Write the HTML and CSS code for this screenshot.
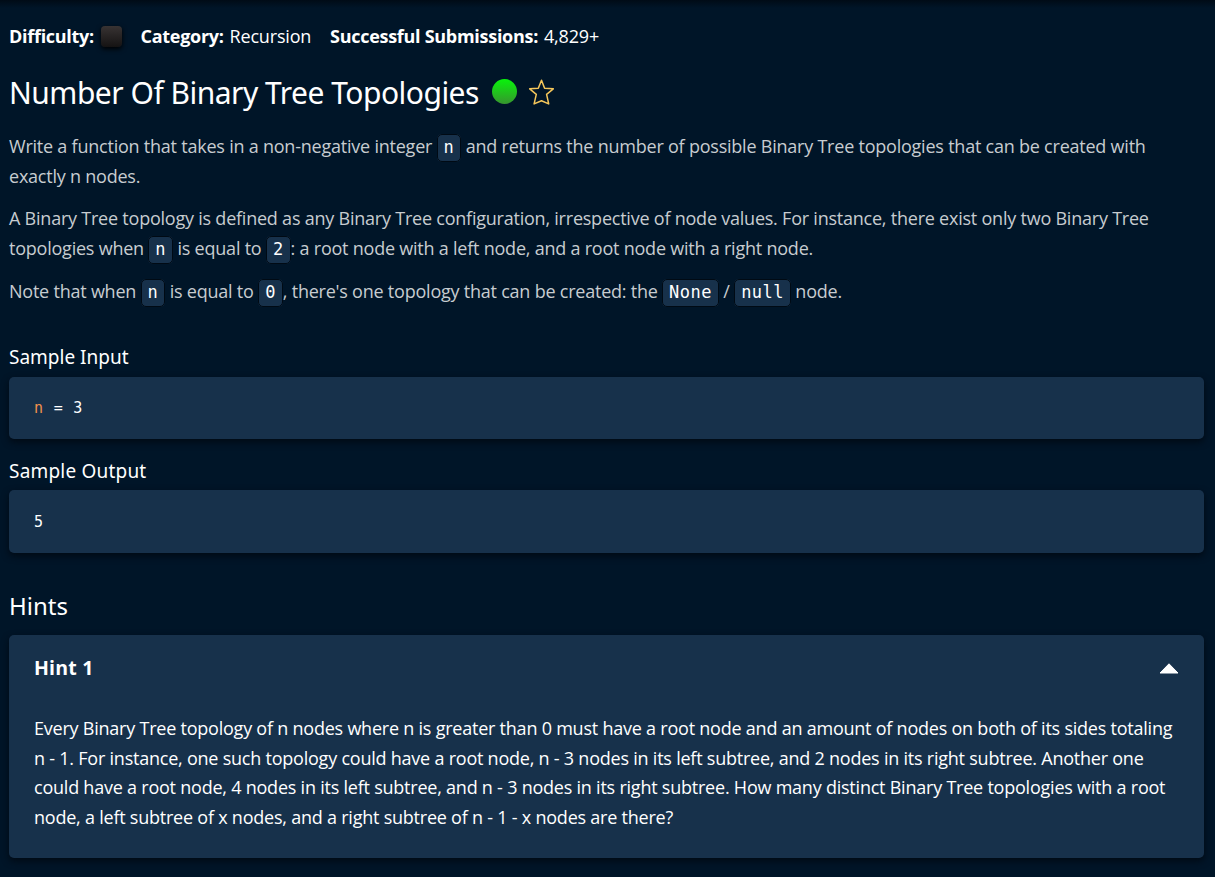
FILE: index.html
```html
<!DOCTYPE html>
<html lang="en">
<head>
<meta charset="utf-8">
<title>Number Of Binary Tree Topologies</title>
<link rel="stylesheet" href="styles.css">
</head>
<body>
<main class="question">
  <div class="stats">
    <div class="stat difficulty"><b>Difficulty:</b><span class="level"></span></div>
    <div class="stat category"><b>Category:</b> Recursion</div>
    <div class="stat submissions"><b>Successful Submissions:</b> 4,829+</div>
  </div>
  <header class="title-row">
    <h1>Number Of Binary Tree Topologies</h1>
    <span class="status"></span>
    <svg class="star" viewBox="0 0 28 28" width="28" height="28"><path d="M14.5 2.2 17.6 10.2 26.3 10.8 19.6 16.3 21.7 25.9 14.5 22.8 7.1 25.9 9.3 16.3 2.7 10.8 11.3 10.2Z"/></svg>
  </header>
  <section class="prompt">
    <p>Write a function that takes in a non-negative integer <code>n</code> and returns the number of possible Binary Tree topologies that can be created with<br>exactly n nodes.</p>
    <p>A Binary Tree topology is defined as any Binary Tree configuration, irrespective of node values. For instance, there exist only two Binary Tree<br>topologies when <code>n</code> is equal to <code>2</code>: a root node with a left node, and a root node with a right node.</p>
    <p>Note that when <code>n</code> is equal to <code>0</code>, there's one topology that can be created: the <code>None</code> / <code>null</code> node.</p>
  </section>
  <h3>Sample Input</h3>
  <pre class="sample"><span class="var">n</span> = 3</pre>
  <h3 class="second">Sample Output</h3>
  <pre class="sample result">5</pre>
  <h2>Hints</h2>
  <section class="hint">
    <div class="hint-head"><h4>Hint 1</h4><svg viewBox="0 0 20 11" width="20" height="11"><path d="M10 .8 19 10H1Z"/></svg></div>
    <p>Every Binary Tree topology of n nodes where n is greater than 0 must have a root node and an amount of nodes on both of its sides totaling<br>n - 1. For instance, one such topology could have a root node, n - 3 nodes in its left subtree, and 2 nodes in its right subtree. Another one<br>could have a root node, 4 nodes in its left subtree, and n - 3 nodes in its right subtree. How many distinct Binary Tree topologies with a root<br>node, a left subtree of x nodes, and a right subtree of n - 1 - x nodes are there?</p>
  </section>
</main>
</body>
</html>
```
FILE: styles.css
```css
* { box-sizing: border-box; }
body {
  margin: 0;
  height: 877px;
  overflow: hidden;
  color: #fff;
  background: linear-gradient(#000b16 0, #001528 8px);
  font-family: "Open Sans", sans-serif;
  font-size: 18px;
}
h1, h2, h3, h4, p, pre { margin: 0; font-weight: 400; white-space: nowrap; }
.question { padding: 21px 11px 0 9px; }
.stats { display: flex; height: 30px; line-height: 30px; letter-spacing: -0.17px; }
.stat { white-space: nowrap; }
.stat b { margin-right: 1.4px; font-weight: 700; letter-spacing: -0.28px; }
.difficulty { display: flex; width: 131.5px; }
.level {
  width: 21px; height: 21px; margin: 5px 0 0 6px;
  border-radius: 4px;
  background: linear-gradient(#383333, #151313);
  box-shadow: 0 2px 5px #000;
}
.category { width: 189.5px; }
.title-row { display: flex; align-items: flex-start; height: 60px; padding-top: 22px; }
h1 { width: 483px; line-height: 40px; font-family: "Noto Sans", sans-serif; font-size: 30px; letter-spacing: -0.5px; }
.status { width: 25px; height: 25px; margin-top: 6px; border-radius: 50%; background: linear-gradient(#08f40a, #37952f); }
.star { margin: 4.5px 0 0 10px; fill: none; stroke: #f5c75b; stroke-width: 1.5; stroke-linejoin: round; }
.prompt { height: 184px; padding-top: 21px; color: #c7ccd0; line-height: 29.7px; letter-spacing: -0.225px; }
.prompt p { margin-bottom: 13px; }
.prompt code {
  padding: 2px 6px 4px; line-height: 1;
  color: #fff; background: #17314b; border: 1px solid #000a14; border-radius: 5px;
  font-family: "DejaVu Sans Mono", monospace; font-size: 17px; letter-spacing: .45px;
}
h3 { height: 35px; margin-top: 47px; line-height: 30px; font-family: "Noto Sans", sans-serif; font-size: 19px; }
h3.second { margin-top: 17px; height: 34px; letter-spacing: .2px; }
.sample {
  height: 62px; padding: 0 25px; line-height: 62px;
  background: #17314b; border-radius: 5px; box-shadow: 0 3px 7px #000a14;
  font-family: "DejaVu Sans Mono", monospace; font-size: 15px; letter-spacing: .8px;
}
.sample.result { height: 63px; line-height: 64px; }
.var { color: #f0904d; }
h2 { height: 82px; padding-top: 37px; line-height: 32px; font-family: "Noto Sans", sans-serif; font-size: 24px; }
.hint { height: 223px; padding: 18px 25px; background: #17314b; border-radius: 5px; box-shadow: 0 3px 7px #000a14; }
.hint-head { display: flex; justify-content: space-between; height: 60.8px; }
.hint-head svg { margin-top: 9.5px; fill: #fff; stroke: #fff; stroke-linejoin: round; }
h4 { font-weight: 700; line-height: 30px; font-size: 19.5px; letter-spacing: .2px; }
.hint p { line-height: 29.7px; letter-spacing: -0.227px; }
```
